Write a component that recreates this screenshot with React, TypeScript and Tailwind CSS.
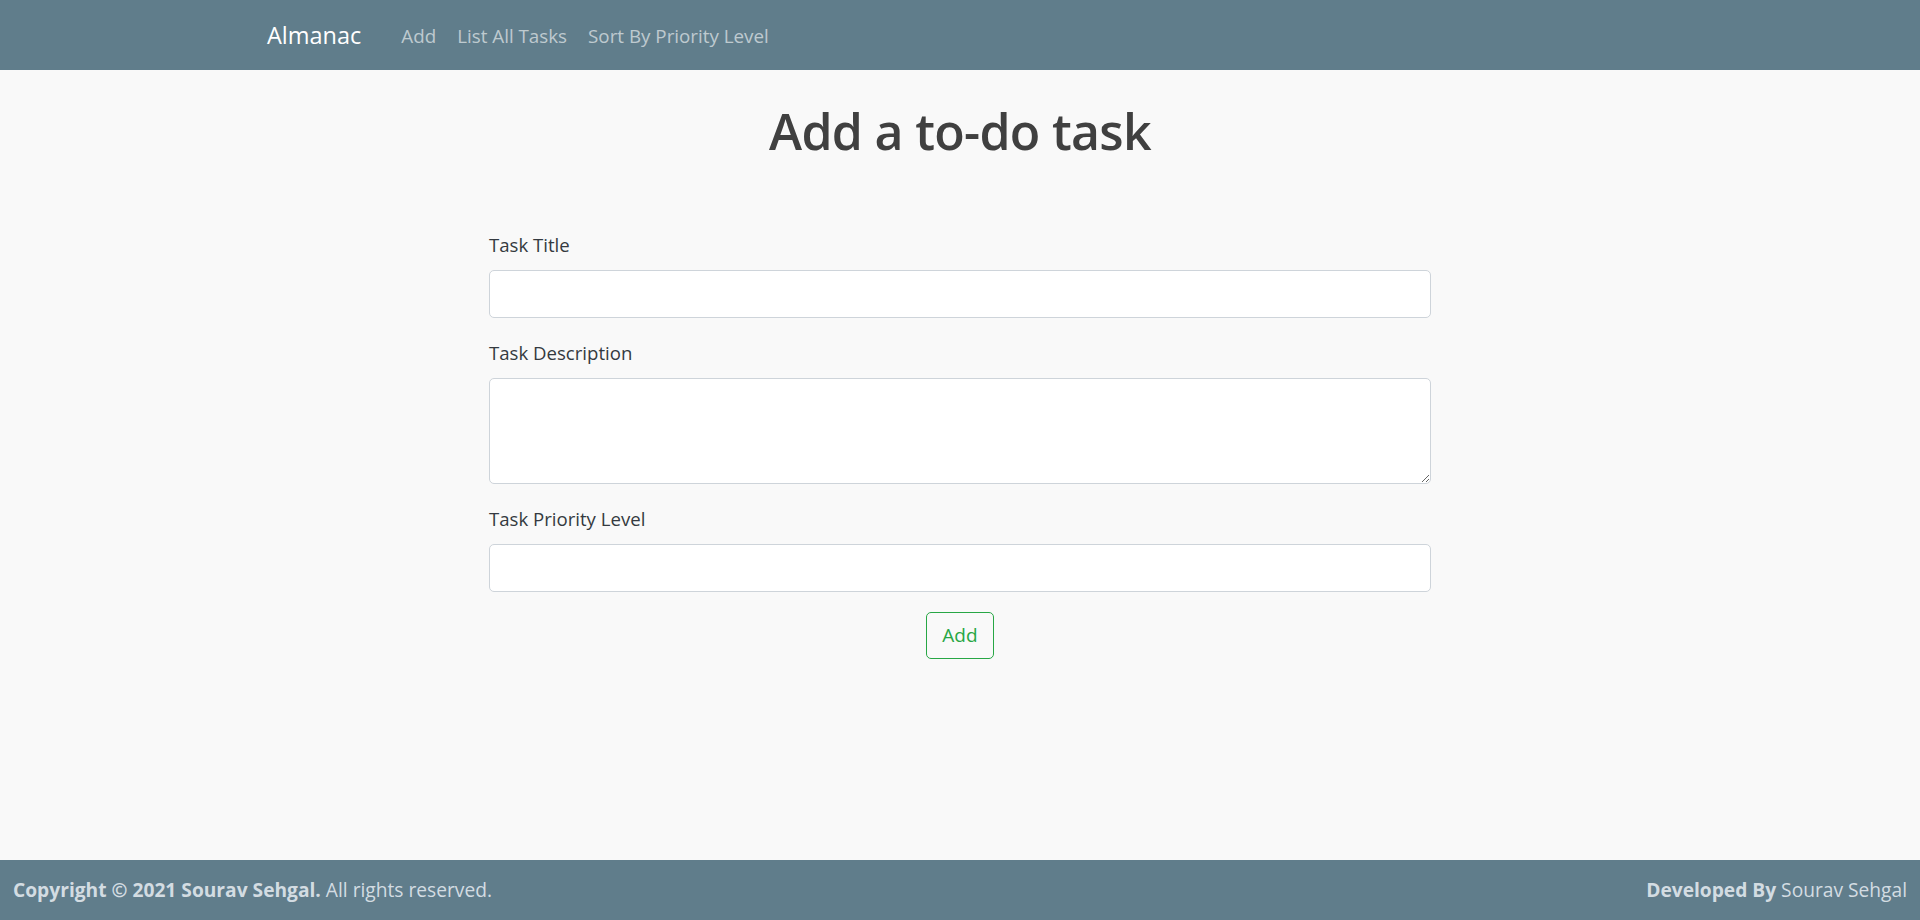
import React from "react";

export default function App() {
  return (
    <div className="min-h-[920px] flex flex-col bg-[#f9f9f9] font-['Open_Sans',sans-serif]">
      <nav className="h-[70px] shrink-0 bg-[#607d8b] flex items-center pl-[267px] pt-[2px]">
        <span className="text-[23.5px] text-white leading-none">Almanac</span>
        <div className="flex items-center ml-[40px] gap-[21px] text-[18.8px] text-white/60 leading-none">
          <span>Add</span>
          <span>List All Tasks</span>
          <span>Sort By Priority Level</span>
        </div>
      </nav>
      <main className="flex-1 flex flex-col items-center">
        <h1 className="mt-[31px] text-[50px] leading-[1.2] font-semibold tracking-[-0.7px] text-[#404040]">Add a to-do task</h1>
        <form className="w-[942px] mt-[69px] flex flex-col text-[#343a40]">
          <label className="block text-[18.6px] leading-[30px] mb-[10px]">Task Title</label>
          <input type="text" className="h-[48px] w-full bg-white border border-[#ced4da] rounded-[5px]" />
          <label className="block text-[18.6px] leading-[30px] mb-[10px] mt-[20px]">Task Description</label>
          <textarea className="h-[106px] w-full bg-white border border-[#ced4da] rounded-[5px]" />
          <label className="block text-[18.6px] leading-[30px] mb-[10px] mt-[20px]">Task Priority Level</label>
          <input type="text" className="h-[48px] w-full bg-white border border-[#ced4da] rounded-[5px]" />
          <div className="flex justify-center mt-[20px]">
            <button type="button" className="h-[47px] px-[15px] text-[19px] text-[#28a745] border border-[#28a745] rounded-[5px] bg-transparent">Add</button>
          </div>
        </form>
      </main>
      <footer className="h-[60px] shrink-0 bg-[#607d8b] flex items-center justify-between px-[13px] text-[19.2px] text-[#d3dce2]">
        <span><b className="font-bold">Copyright © 2021 Sourav Sehgal.</b> All rights reserved.</span>
        <span><b className="font-bold">Developed By</b> Sourav Sehgal</span>
      </footer>
    </div>
  );
}
